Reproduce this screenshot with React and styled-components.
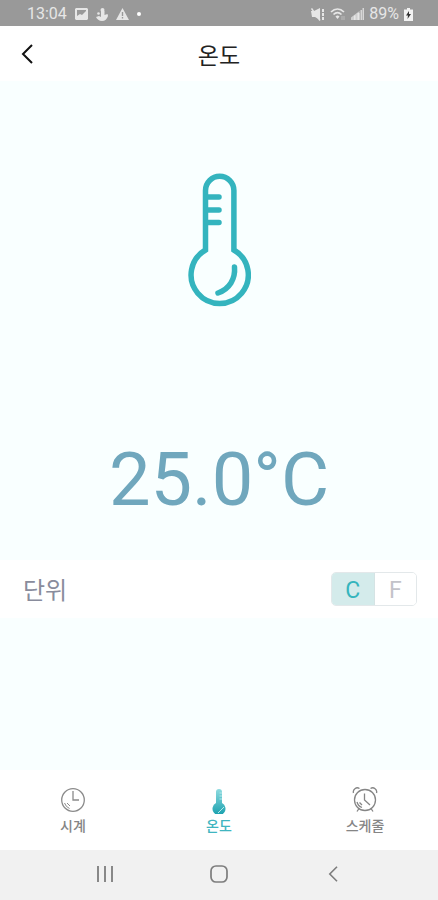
import React, { useState } from "react";
import styled, { createGlobalStyle } from "styled-components";

const GlobalStyle = createGlobalStyle`
    * {
        box-sizing: border-box;
    }
    body {
        margin: 0;
        background: #f9ffff;
        font-family: Roboto, "Noto Sans CJK KR", sans-serif;
    }
    button {
        font-family: inherit;
    }
`;

const Screen = styled.div`
    display: flex;
    flex-direction: column;
    min-height: 100vh;
    background: #f9ffff;
`;

const StatusBar = styled.div`
    display: flex;
    align-items: center;
    justify-content: space-between;
    height: 26px;
    padding: 2px 25px 0 27px;
    background: #999;
    color: #e6e6e6;
    font-size: 16px;
    line-height: 24px;
`;

const StatusGroup = styled.div`
    display: flex;
    align-items: center;
    gap: ${(props) => props.$gap}px;
    svg {
        display: block;
    }
`;

const Header = styled.header`
    display: grid;
    grid-template-columns: 54px 1fr 54px;
    align-items: center;
    height: 55px;
    background: #fff;
`;

const BackButton = styled.button`
    display: flex;
    align-items: center;
    justify-content: center;
    height: 55px;
    padding: 0;
    border: 0;
    background: none;
    color: #111;
`;

const Title = styled.h1`
    margin: 0;
    padding-top: 6px;
    color: #222;
    font-size: 23px;
    font-weight: 400;
    line-height: 32px;
    text-align: center;
`;

const Display = styled.main`
    display: flex;
    flex-direction: column;
    align-items: center;
    padding: 92px 0 32px;
    gap: 124px;
    svg {
        display: block;
    }
`;

const Temperature = styled.p`
    margin: 0;
    color: #70a7bd;
    font-size: 74px;
    line-height: 97px;
`;

const UnitRow = styled.section`
    display: flex;
    align-items: center;
    justify-content: space-between;
    height: 58px;
    padding: 0 21px 0 23px;
    background: #fff;
`;

const UnitLabel = styled.span`
    padding-top: 4px;
    color: #898c9c;
    font-size: 24px;
    line-height: 32px;
`;

const UnitToggle = styled.div`
    display: flex;
    width: 86px;
    height: 34px;
    border: 1px solid #e3e8ea;
    border-radius: 5px;
    overflow: hidden;
`;

const UnitButton = styled.button`
    flex: 1;
    padding: 2px 0 0;
    border: 0;
    background: ${(props) => (props.$active ? "#d4ebeb" : "#fff")};
    color: ${(props) => (props.$active ? "#36b5bd" : "#c3c3c9")};
    font-size: 23px;
    line-height: 32px;
    & + & {
        border-left: 1px solid #d5e3e4;
    }
`;

const TabBar = styled.nav`
    display: grid;
    grid-template-columns: repeat(3, 1fr);
    height: 80px;
    margin-top: auto;
    background: #fff;
`;

const Tab = styled.button`
    display: flex;
    flex-direction: column;
    align-items: center;
    gap: 2px;
    padding: 16px 0 0;
    border: 0;
    background: none;
    color: ${(props) => (props.$active ? "#40b5c0" : "#858585")};
    font-size: 14px;
    font-weight: 500;
    line-height: 20px;
    svg {
        display: block;
    }
`;

const SystemBar = styled.div`
    display: flex;
    align-items: center;
    justify-content: space-between;
    height: 50px;
    padding: 0 89px 2px;
    background: #f1f1f1;
`;

const SystemButton = styled.button`
    display: flex;
    align-items: center;
    justify-content: center;
    width: 32px;
    height: 32px;
    padding: 0;
    border: 0;
    background: none;
    color: #7d7d7d;
`;

const ImageIcon = () => (
    <svg width="13" height="12" viewBox="0 0 13 12">
        <path
            fill="currentColor"
            fillRule="evenodd"
            d="M1 0h11l1 1v10l-1 1H1l-1-1V1zM2 2v6l3-2 2 1 4-4V2z"
        />
    </svg>
);

const CleanIcon = () => (
    <svg width="12" height="13" viewBox="0 0 12 13" fill="currentColor">
        <circle cx="6.500" cy="2" r="2" />
        <path d="M5 3h3.500v4l3-1 .5 2c-1 3-3 5-6 5S1 11 0 9l3-1 2 1z" />
        <circle cx="2.500" cy="5.500" r="1.300" />
    </svg>
);

const WarningIcon = () => (
    <svg width="13" height="12" viewBox="0 0 13 12">
        <path
            fill="currentColor"
            fillRule="evenodd"
            d="M6.500 0L13 12H0zM5.800 4v4h1.400V4zM5.800 9v1.500h1.400V9z"
        />
    </svg>
);

const DotIcon = () => (
    <svg width="4" height="4" viewBox="0 0 4 4">
        <circle cx="2" cy="2" r="2" fill="#fff" />
    </svg>
);

const MuteIcon = () => (
    <svg width="14" height="13" viewBox="0 0 14 13">
        <path fill="currentColor" d="M0 3h3l6-3v12L4 9H1z" />
        <path
            d="M0.500 0.500l8.500 12"
            stroke="currentColor"
            strokeWidth="1.500"
        />
        <path
            d="M12 1v11"
            stroke="currentColor"
            strokeWidth="2"
            strokeDasharray="3 1"
        />
    </svg>
);

const WifiIcon = () => (
    <svg width="16" height="13" viewBox="0 0 16 13" fill="none">
        <path
            d="M1 4c4-4 9-4 13 0M3.500 6.500c2.500-2.500 5.500-2.500 8 0"
            stroke="currentColor"
            strokeWidth="1.700"
        />
        <path d="M5.500 8.500q2-2 4 0l-2 2.500z" fill="currentColor" />
        <path d="M12 8v4M14 8v4" stroke="#bbb" />
    </svg>
);

const SignalIcon = () => (
    <svg width="13" height="12" viewBox="0 0 13 12" fill="currentColor">
        <path d="M0 9.500L8.500 3v9H0z" opacity="0.700" />
        <path d="M3 7.500h1.500V12H3zM6.500 5h2v7h-2z" />
        <path d="M9.500 2H11v10H9.500zM11.500 0H13v12h-1.500z" opacity="0.800" />
    </svg>
);

const BatteryIcon = () => (
    <svg width="9" height="13" viewBox="0 0 9 13">
        <path fill="#f2f2f2" d="M3 0h3v1.500h3V13H0V1.500h3z" />
        <path fill="#333" d="M5 3L2 7.500h2L3.500 11 7 6H5z" />
    </svg>
);

const Chevron = ({ width, height, strokeWidth }) => (
    <svg
        width={width}
        height={height}
        viewBox="0 0 12 20"
        fill="none"
        stroke="currentColor"
        strokeWidth={strokeWidth}
    >
        <path d="M11 1L2 10l9 9" />
    </svg>
);

const Thermometer = () => (
    <svg
        width="64"
        height="134"
        viewBox="-1 0 64 134"
        fill="none"
        stroke="#34b4be"
        strokeWidth="5.500"
        strokeLinecap="round"
    >
        <path
            strokeLinejoin="miter"
            d="M17.500 77V17.500a14.200 14.200 0 0 1 28.400 0V77A28.600 28.600 0 1 1 17.500 77z"
        />
        <path d="M19 24h12M19 37h12M19 49.500h12" />
        <path d="M46.500 94c1 12-5 22-16.500 26" />
    </svg>
);

const ClockIcon = () => (
    <svg
        width="26"
        height="28"
        viewBox="0 0 26 28"
        fill="none"
        stroke="#8b8b8b"
        strokeWidth="1.300"
    >
        <circle cx="13" cy="14" r="11.300" />
        <path d="M13 5v9h6" />
        <path d="M4.500 17a9 9 0 0 0 5 5.500M7 17l3 3" strokeWidth="1" />
    </svg>
);

const SmallThermometer = () => (
    <svg width="26" height="28" viewBox="0 0 26 28">
        <defs>
            <linearGradient id="mercury" x1="0" y1="0" x2="0" y2="1">
                <stop offset="0" stopColor="#8edbe0" />
                <stop offset="1" stopColor="#18a0ae" />
            </linearGradient>
        </defs>
        <path
            fill="url(#mercury)"
            d="M10 6a3 3 0 0 1 6 0v11a6.500 6.500 0 1 1-6 0z"
        />
        <path
            d="M13.500 7h2.500M13.500 10h2.500M13.500 13h2.500M12 27l6-6"
            stroke="#b8e9eb"
            strokeWidth="1"
        />
    </svg>
);

const AlarmIcon = () => (
    <svg
        width="26"
        height="28"
        viewBox="0 0 26 28"
        fill="none"
        stroke="#858585"
        strokeWidth="1.300"
    >
        <circle cx="13" cy="14" r="10.500" />
        <path d="M1.500 7a4 4 0 0 1 6-4.500M18.500 2.500a4 4 0 0 1 6 4.500M7 22.500l-2 3M19 22.500l2 3" />
        <path d="M12.500 7.500V14l5.500 5M5 16a8 8 0 0 0 5 5.500M7.500 16.500l2.500 2.500" />
    </svg>
);

const RecentIcon = () => (
    <svg width="18" height="16" viewBox="0 0 18 16">
        <path
            d="M2 0v16M9 0v16M16 0v16"
            stroke="currentColor"
            strokeWidth="1.800"
        />
    </svg>
);

const HomeIcon = () => (
    <svg width="18" height="18" viewBox="0 0 18 18">
        <rect
            x="1"
            y="1"
            width="16"
            height="16"
            rx="5"
            fill="none"
            stroke="currentColor"
            strokeWidth="1.700"
        />
    </svg>
);

const tabs = [
    { id: "clock", label: "시계", Icon: ClockIcon },
    { id: "temperature", label: "온도", Icon: SmallThermometer },
    { id: "schedule", label: "스케줄", Icon: AlarmIcon },
];

const CELSIUS = 25;

const App = () => {
    const [unit, setUnit] = useState("C");
    const [tab, setTab] = useState("temperature");

    const value = unit === "C" ? CELSIUS : (CELSIUS * 9) / 5 + 32;

    return (
        <React.Fragment>
            <GlobalStyle />
            <Screen>
                <StatusBar>
                    <StatusGroup $gap={8}>
                        <span>13:04</span>
                        <ImageIcon />
                        <CleanIcon />
                        <WarningIcon />
                        <DotIcon />
                    </StatusGroup>
                    <StatusGroup $gap={5}>
                        <MuteIcon />
                        <WifiIcon />
                        <SignalIcon />
                        <span>89%</span>
                        <BatteryIcon />
                    </StatusGroup>
                </StatusBar>
                <Header>
                    <BackButton type="button" aria-label="뒤로">
                        <Chevron width={12} height={20} strokeWidth={2} />
                    </BackButton>
                    <Title>온도</Title>
                </Header>
                <Display>
                    <Thermometer />
                    <Temperature>
                        {value.toFixed(1)}°{unit}
                    </Temperature>
                </Display>
                <UnitRow>
                    <UnitLabel id="unit-label">단위</UnitLabel>
                    <UnitToggle role="group" aria-labelledby="unit-label">
                        {["C", "F"].map((name) => (
                            <UnitButton
                                key={name}
                                type="button"
                                aria-pressed={unit === name}
                                $active={unit === name}
                                onClick={() => setUnit(name)}
                            >
                                {name}
                            </UnitButton>
                        ))}
                    </UnitToggle>
                </UnitRow>
                <TabBar>
                    {tabs.map(({ id, label, Icon }) => (
                        <Tab
                            key={id}
                            type="button"
                            $active={tab === id}
                            onClick={() => setTab(id)}
                        >
                            <Icon />
                            {label}
                        </Tab>
                    ))}
                </TabBar>
                <SystemBar>
                    <SystemButton type="button" aria-label="최근 앱">
                        <RecentIcon />
                    </SystemButton>
                    <SystemButton type="button" aria-label="홈">
                        <HomeIcon />
                    </SystemButton>
                    <SystemButton type="button" aria-label="이전">
                        <Chevron width={10} height={16} strokeWidth={2} />
                    </SystemButton>
                </SystemBar>
            </Screen>
        </React.Fragment>
    );
};

export default App;
